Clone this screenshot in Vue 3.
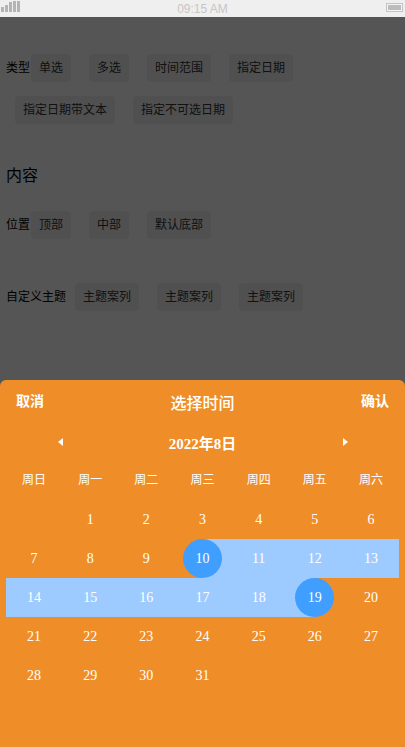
<script setup>
const rows = [
  { label: '类型', buttons: ['单选', '多选', '时间范围', '指定日期', '指定日期带文本', '指定不可选日期'] },
]
const positions = ['顶部', '中部', '默认底部']
const themes = ['主题案列', '主题案列', '主题案列']
const weekdays = ['周日', '周一', '周二', '周三', '周四', '周五', '周六']
const start = 10
const end = 19
const days = []
for (let i = 0; i < 1; i++) days.push({ key: 'blank', n: '' })
for (let d = 1; d <= 31; d++) days.push({ key: d, n: d })
function cellClass(n) {
  if (!n) return ''
  return {
    'is-start': n === start,
    'is-end': n === end,
    'in-range': n > start && n < end,
  }
}
const bars = [5, 7, 10, 13, 16]
</script>

<template>
  <div class="phone">
    <header class="status">
      <div class="signal">
        <i v-for="h in bars" :key="h" class="bar" :style="{ height: h + 'px' }"></i>
      </div>
      <span class="clock">09:15 AM</span>
      <div class="battery"><i class="charge"></i></div>
    </header>

    <main class="page">
      <section class="row row-type">
        <span class="label">{{ rows[0].label }}</span>
        <button v-for="b in rows[0].buttons" :key="b" class="btn">{{ b }}</button>
      </section>
      <h2 class="title">内容</h2>
      <section class="row row-pos">
        <span class="label">位置</span>
        <button v-for="b in positions" :key="b" class="btn">{{ b }}</button>
      </section>
      <section class="row row-theme">
        <span class="label">自定义主题</span>
        <button v-for="(b, i) in themes" :key="i" class="btn">{{ b }}</button>
      </section>
      <div class="mask"></div>
    </main>

    <section class="sheet">
      <div class="sheet-head">
        <span class="action">取消</span>
        <span class="sheet-title">选择时间</span>
        <span class="action">确认</span>
      </div>
      <div class="month">
        <i class="arrow arrow-left"></i>
        <span class="month-text">2022年8日</span>
        <i class="arrow arrow-right"></i>
      </div>
      <div class="grid week">
        <span v-for="w in weekdays" :key="w" class="wd">{{ w }}</span>
      </div>
      <div class="grid days">
        <div v-for="d in days" :key="d.key" class="day" :class="cellClass(d.n)">
          <span class="num">{{ d.n }}</span>
        </div>
      </div>
    </section>
  </div>
</template>

<style scoped>
.phone {
  position: relative;
  width: 405px;
  height: 747px;
  overflow: hidden;
  background: #fff;
  font-family: "Liberation Serif", "Noto Sans CJK SC", serif;
  display: flex;
  flex-direction: column;
}
.status {
  height: 17px;
  flex: none;
  background: #efefef;
  display: flex;
  align-items: center;
  justify-content: space-between;
  padding: 0 1px;
  position: relative;
}
.signal {
  display: flex;
  align-items: flex-end;
  gap: 1px;
  height: 12px;
  margin-top: -6px;
}
.bar {
  width: 3px;
  background: #b4b4b4;
  max-height: 11px;
}
.clock {
  position: absolute;
  left: 0;
  right: 0;
  text-align: center;
  font: 12px "Liberation Sans", sans-serif;
  color: #c6c6c6;
}
.battery {
  width: 17px;
  height: 9px;
  border: 1px solid #c4c4c4;
  background: #f4f4f4;
  padding: 1px;
  box-sizing: border-box;
  margin-right: 1px;
  margin-top: -3px;
}
.charge {
  display: block;
  height: 100%;
  background: #bcbcbc;
}
.page {
  position: relative;
  flex: 1;
  padding: 0 6px;
  color: #000;
}
.mask {
  position: absolute;
  inset: 0;
  background: rgba(0, 0, 0, 0.667);
}
.row {
  display: flex;
  flex-wrap: wrap;
  align-items: center;
  font-size: 12px;
}
.row-type {
  padding-top: 37px;
  row-gap: 14px;
}
.row-pos {
  padding-top: 24px;
}
.row-theme {
  padding-top: 44px;
}
.label {
  font-size: 12px;
  line-height: 28px;
  flex: none;
}
.btn {
  margin: 0 9px;
  height: 28px;
  padding: 0 8px;
  border: 0;
  border-radius: 4px;
  background: #f1f1f1;
  color: #333;
  font: inherit;
  line-height: 28px;
}
.label + .btn {
  margin-left: 1px;
}
.row-type .btn:nth-of-type(5) {
  margin-left: 9px;
}
.row-theme .label + .btn {
  margin-left: 9px;
}
.title {
  margin: 0;
  padding-top: 41px;
  font-size: 16px;
  line-height: 22px;
  font-weight: 400;
}
.sheet {
  position: absolute;
  left: 0;
  right: 0;
  bottom: 0;
  height: 367px;
  background: #ef8e28;
  border-radius: 6px 6px 0 0;
  color: #fff;
  padding: 0 6px;
  box-sizing: border-box;
}
.sheet-head {
  display: flex;
  justify-content: space-between;
  padding: 12px 10px 0;
  height: 50px;
  box-sizing: border-box;
}
.action {
  font-size: 14px;
  line-height: 20px;
  font-weight: 700;
}
.sheet-title {
  font-size: 16px;
  line-height: 24px;
  font-weight: 500;
  padding-top: 0;
}
.month {
  display: flex;
  align-items: center;
  justify-content: center;
  height: 24px;
  margin-top: 0;
  gap: 104px;
}
.month-text {
  font-size: 15px;
  font-weight: 700;
  width: 72px;
  text-align: center;
  white-space: nowrap;
}
.arrow {
  width: 0;
  height: 0;
  border-top: 4px solid transparent;
  border-bottom: 4px solid transparent;
}
.arrow-left {
  border-right: 5px solid #fff;
}
.arrow-right {
  border-left: 5px solid #fff;
}
.grid {
  display: grid;
  grid-template-columns: repeat(7, 1fr);
}
.week {
  margin-top: 15px;
  height: 20px;
  align-items: center;
  text-align: center;
  font-size: 12px;
}
.days {
  margin-top: 11px;
  grid-auto-rows: 39px;
}
.day {
  position: relative;
  display: flex;
  align-items: center;
  justify-content: center;
  font-size: 14px;
}
.num {
  position: relative;
}
.in-range {
  background: #9ecbff;
}
.is-start,
.is-end {
  background: linear-gradient(90deg, transparent 50%, #9ecbff 50%);
}
.is-end {
  background: linear-gradient(90deg, #9ecbff 50%, transparent 50%);
}
.is-start::before,
.is-end::before {
  content: "";
  position: absolute;
  left: 50%;
  top: 0;
  width: 39px;
  height: 39px;
  margin-left: -19.5px;
  border-radius: 50%;
  background: #409eff;
}
</style>
